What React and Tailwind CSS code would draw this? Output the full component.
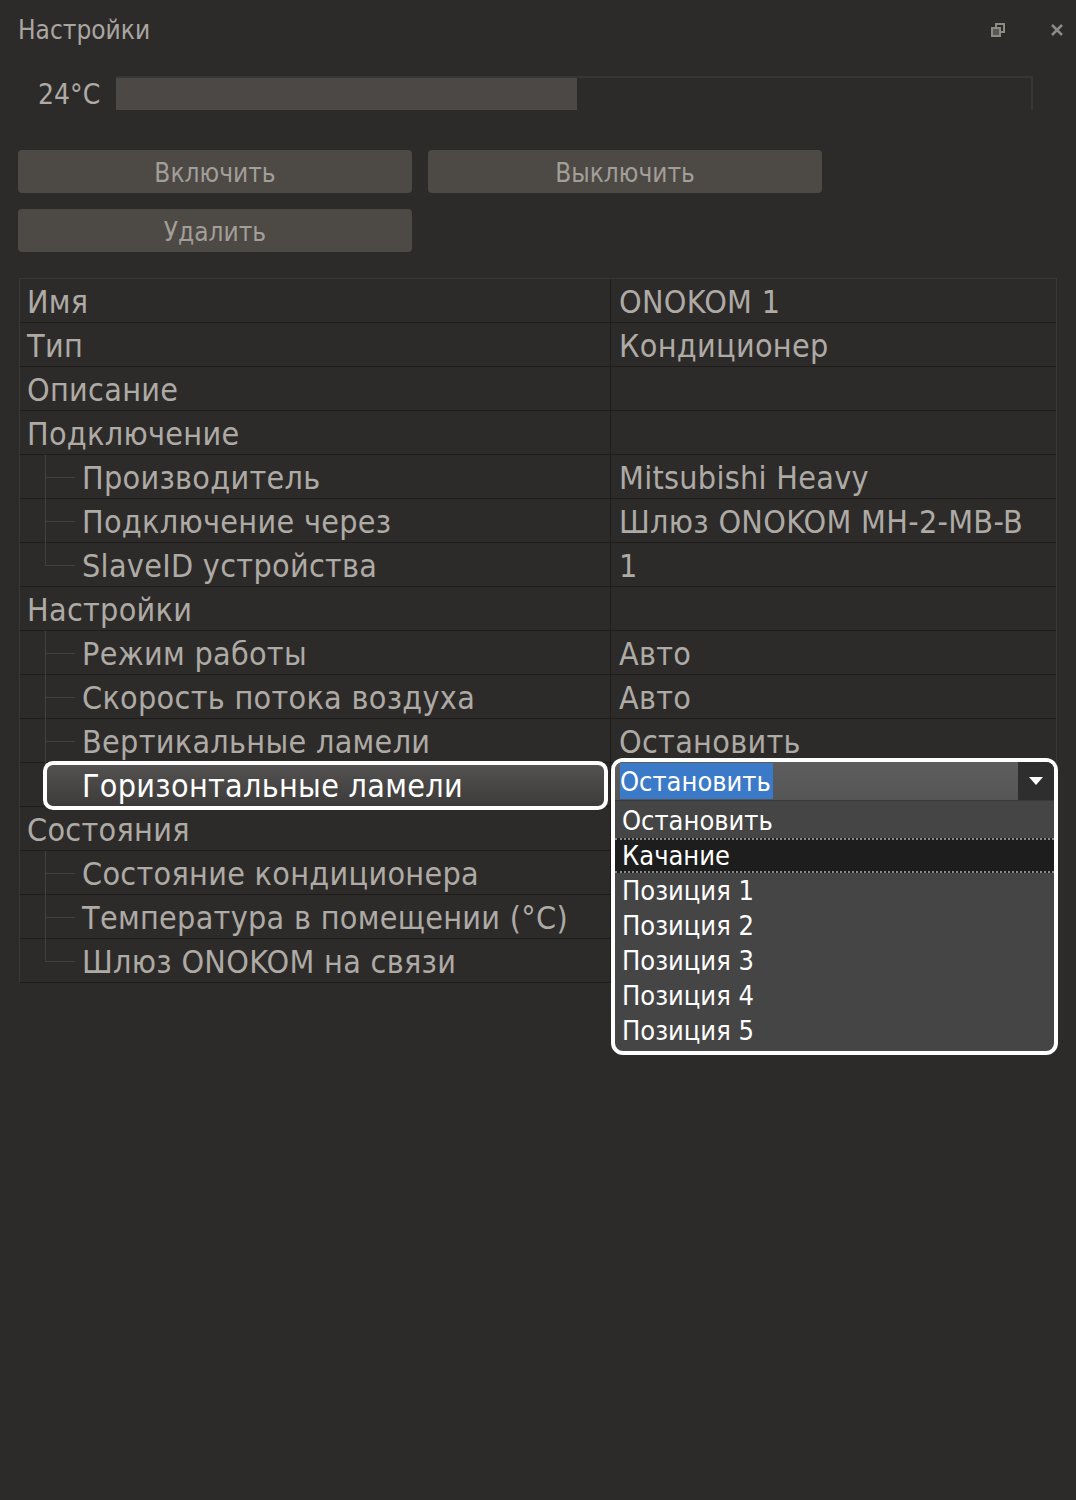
import React from "react";

const FONT = { fontFamily: '"DejaVu Sans Condensed", "DejaVu Sans", sans-serif' };

const rows = [
  { label: "Имя", value: "ONOKOM 1", level: 0 },
  { label: "Тип", value: "Кондиционер", level: 0 },
  { label: "Описание", value: "", level: 0 },
  { label: "Подключение", value: "", level: 0 },
  { label: "Производитель", value: "Mitsubishi Heavy", level: 1 },
  { label: "Подключение через", value: "Шлюз ONOKOM MH-2-MB-B", level: 1 },
  { label: "SlaveID устройства", value: "1", level: 1, last: true },
  { label: "Настройки", value: "", level: 0 },
  { label: "Режим работы", value: "Авто", level: 1 },
  { label: "Скорость потока воздуха", value: "Авто", level: 1 },
  { label: "Вертикальные ламели", value: "Остановить", level: 1 },
  { label: "Горизонтальные ламели", value: "", level: 1, last: true, selected: true },
  { label: "Состояния", value: "", level: 0 },
  { label: "Состояние кондиционера", value: "", level: 1 },
  { label: "Температура в помещении (°C)", value: "", level: 1 },
  { label: "Шлюз ONOKOM на связи", value: "", level: 1, last: true },
];

const options = ["Остановить", "Качание", "Позиция 1", "Позиция 2", "Позиция 3", "Позиция 4", "Позиция 5"];

function Connector({ last }) {
  return (
    <div className="flex flex-col h-full w-[30px] ml-[25px] shrink-0">
      <div className="flex-1 border-l border-b border-[#43403d]" />
      <div className={"flex-1 " + (last ? "" : "border-l border-[#43403d]")} />
    </div>
  );
}

function Row({ r }) {
  return (
    <div className="grid grid-cols-[591px_1fr] h-[44px] border-b border-[#1f1d1c]">
      <div className="relative flex items-center h-full border-r border-[#1f1d1c]">
        {r.selected && (
          <div className="absolute left-[25px] right-[4px] top-[1px] bottom-[1px] bg-gradient-to-b from-[#555352] to-[#3c3b3a]" />
        )}
        {r.level === 1 && <Connector last={r.last} />}
        <span
          className={
            "relative pl-[7px] pt-[3px] leading-[41px] text-[32px] tracking-[0.3px] whitespace-nowrap " +
            (r.selected ? "text-white" : "text-[#aeaaa5]")
          }
        >
          {r.label}
        </span>
        {r.selected && (
          <div className="absolute left-[23px] right-[2px] -top-[2px] -bottom-[3px] border-4 border-white rounded-[10px]" />
        )}
      </div>
      <div className="flex items-center pl-[8px] pt-[3px] text-[32px] tracking-[0.3px] leading-[41px] text-[#aeaaa5] whitespace-nowrap">
        {r.value}
      </div>
    </div>
  );
}

export default function App() {
  return (
    <div className="w-[1076px] h-[1500px] bg-[#2d2b29] overflow-hidden" style={FONT}>
      {/* Title bar */}
      <div className="flex items-center h-[60px] pl-[18px] pr-[12px]">
        <span className="text-[26px] text-[#a9a6a1] flex-1 leading-none">Настройки</span>
        <svg width="16" height="16" viewBox="0 0 16 16" className="mr-[44px]">
          <rect x="6" y="2" width="8" height="8" fill="none" stroke="#8d8a86" strokeWidth="2" />
          <rect x="2" y="6" width="8" height="8" fill="#5a5754" stroke="#8d8a86" strokeWidth="2" />
        </svg>
        <svg width="14" height="14" viewBox="0 0 14 14">
          <path d="M2 2 L12 12 M12 2 L2 12" stroke="#8d8a86" strokeWidth="2.5" />
        </svg>
      </div>

      {/* Temperature slider */}
      <div className="flex items-center h-[34px] mt-[16px] pl-[38px]">
        <span className="w-[78px] text-[28px] text-[#aeaaa5] leading-none pt-[3px]">24°C</span>
        <div className="flex h-[34px] w-[917px] border-t-2 border-r-2 border-[#383634]">
          <div className="w-[461px] h-full bg-[#4c4845]" />
        </div>
      </div>

      {/* Buttons */}
      <div className="flex flex-col gap-[16px] mt-[40px] px-[18px]">
        <div className="flex gap-[16px]">
          <button className="w-[394px] h-[43px] rounded-[4px] bg-[#4d4945] text-[26px] text-[#a29e98] pt-[3px]">Включить</button>
          <button className="w-[394px] h-[43px] rounded-[4px] bg-[#4d4945] text-[26px] text-[#a29e98] pt-[3px]">Выключить</button>
        </div>
        <div className="flex">
          <button className="w-[394px] h-[43px] rounded-[4px] bg-[#4d4945] text-[26px] text-[#a29e98] pt-[3px]">Удалить</button>
        </div>
      </div>

      {/* Property table */}
      <div className="relative mt-[26px] ml-[19px] w-[1038px] border-l border-t border-r border-[#3a3835]">
        {rows.map((r, i) => (
          <Row key={i} r={r} />
        ))}

        {/* Dropdown overlay */}
        <div className="absolute left-[591px] top-[479px] w-[447px] h-[297px] border-4 border-white rounded-[12px] bg-[#454545] flex flex-col overflow-hidden">
          <div className="flex h-[39px] shrink-0 bg-gradient-to-b from-[#5e5e5e] to-[#555555] border-b border-[#3a3a3a]">
            <div className="flex-1 flex items-center pl-[5px]">
              <span className="bg-[#3b7ac8] text-white text-[27px] leading-[35px] pt-[1px] pr-[2px]">Остановить</span>
            </div>
            <div className="w-[36px] h-full bg-[#2e2e2e] flex items-center justify-center">
              <svg width="14" height="8" viewBox="0 0 14 8">
                <path d="M0 0 L14 0 L7 8 Z" fill="#ffffff" />
              </svg>
            </div>
          </div>
          <div className="flex flex-col pt-[2px]">
            {options.map((o, i) => (
              <div
                key={i}
                className={
                  "h-[35px] flex items-center pl-[7px] pt-[2px] text-[27px] text-white whitespace-nowrap " +
                  (i === 1 ? "bg-[#1d1d1d] border-y-2 border-dotted border-[#8a8a8a]" : "")
                }
              >
                {o}
              </div>
            ))}
          </div>
        </div>
      </div>
    </div>
  );
}
